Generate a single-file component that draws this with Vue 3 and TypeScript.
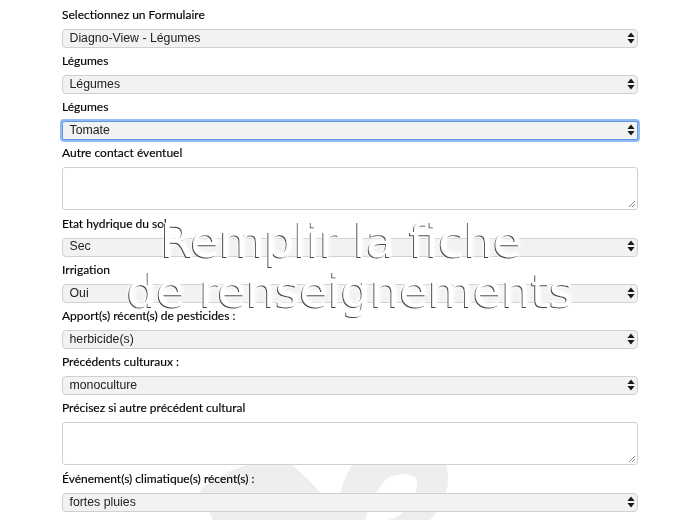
<script setup lang="ts">
interface Field {
  label: string
  value?: string
  focused?: boolean
}

const fields: Field[] = [
  { label: 'Selectionnez un Formulaire', value: 'Diagno-View - Légumes' },
  { label: 'Légumes', value: 'Légumes' },
  { label: 'Légumes', value: 'Tomate', focused: true },
  { label: 'Autre contact éventuel' },
  { label: 'Etat hydrique du sol', value: 'Sec' },
  { label: 'Irrigation', value: 'Oui' },
  { label: 'Apport(s) récent(s) de pesticides :', value: 'herbicide(s)' },
  { label: 'Précédents culturaux :', value: 'monoculture' },
  { label: 'Précisez si autre précédent cultural' },
  { label: 'Événement(s) climatique(s) récent(s) :', value: 'fortes pluies' },
]
</script>

<template>
  <div class="page">
    <svg class="watermark" width="270" height="70" viewBox="190 450 270 70" aria-hidden="true">
      <path d="M200 490 C225 470 260 458 283 458 C300 470 320 490 336 512 C338 495 345 475 356 458 L445 458 C451 480 449 500 430 520 L213 520 Z" fill="#eee" />
      <path d="M365 520 C372 500 380 480 392 476 C402 473 415 474 417 480 C418 495 408 510 396 517 L388 520 Z" fill="#fff" />
    </svg>
    <form class="form">
      <div v-for="(field, i) in fields" :key="i" class="field">
        <label class="label">{{ field.label }}</label>
        <div v-if="field.value" class="select" :class="{ focused: field.focused }">
          <span class="value">{{ field.value }}</span>
          <svg class="arrows" width="8" height="12" viewBox="0 0 8 12" aria-hidden="true">
            <path d="M4 0.5 L7.6 5 L0.4 5 Z M4 11.5 L7.6 7 L0.4 7 Z" fill="#1a1a1a" />
          </svg>
        </div>
        <div v-else class="textarea">
          <svg class="grip" width="8" height="8" viewBox="0 0 8 8" aria-hidden="true">
            <path d="M1 7 L7 1 M4 7 L7 4" stroke="#888" stroke-width="1" fill="none" />
          </svg>
        </div>
      </div>
    </form>
    <h1 class="title"><span class="first-line">Remplir la fiche</span><br />de renseignements</h1>
  </div>
</template>

<style scoped>
.page {
  position: relative;
  width: 700px;
  height: 520px;
  overflow: hidden;
  background: #fff;
}
.watermark {
  position: absolute;
  left: 190px;
  top: 450px;
}
.form {
  position: relative;
  display: flex;
  flex-direction: column;
  width: 576px;
  padding: 5px 0 0 62px;
  font-family: Lato, sans-serif;
  filter: blur(0.3px);
}
.field {
  display: flex;
  flex-direction: column;
  margin-bottom: 3.1px;
}
.label {
  height: 20px;
  line-height: 20px;
  margin-bottom: 4px;
  font-size: 12px;
  font-weight: 400;
  color: #000;
  -webkit-text-stroke: 0.15px #000;
}
.select {
  display: flex;
  align-items: center;
  justify-content: space-between;
  box-sizing: border-box;
  height: 19px;
  padding: 0 2px 2px 6.5px;
  border: 1px solid #d0d0d0;
  border-radius: 4px;
  background: #f2f2f2;
  font-family: "Liberation Sans", Arial, sans-serif;
  font-size: 12.3px;
  color: #222;
}
.select.focused {
  border-color: #5e97ea;
  border-radius: 2px;
  box-shadow: 0 0 0 2px #93bcf3;
}
.arrows {
  flex: none;
}
.textarea {
  position: relative;
  box-sizing: border-box;
  height: 43px;
  margin-top: -0.4px;
  margin-bottom: 1px;
  border: 1px solid #d0d0d0;
  border-radius: 3px;
  background: #fff;
}
.grip {
  position: absolute;
  right: 1px;
  bottom: 1px;
}
.title {
  position: absolute;
  left: 0;
  top: 216px;
  width: 700px;
  margin: 0;
  font-family: "DejaVu Sans", sans-serif;
  font-size: 46.3px;
  font-weight: 400;
  line-height: 50px;
  text-align: center;
  color: #fff;
  opacity: 0.999;
  -webkit-text-stroke: 0.2px #fff;
  text-shadow: -1px 1px 0 #444, 0 0 4px #fff, 0 0 4px #fff;
}
.first-line {
  padding-right: 18px;
}
</style>
